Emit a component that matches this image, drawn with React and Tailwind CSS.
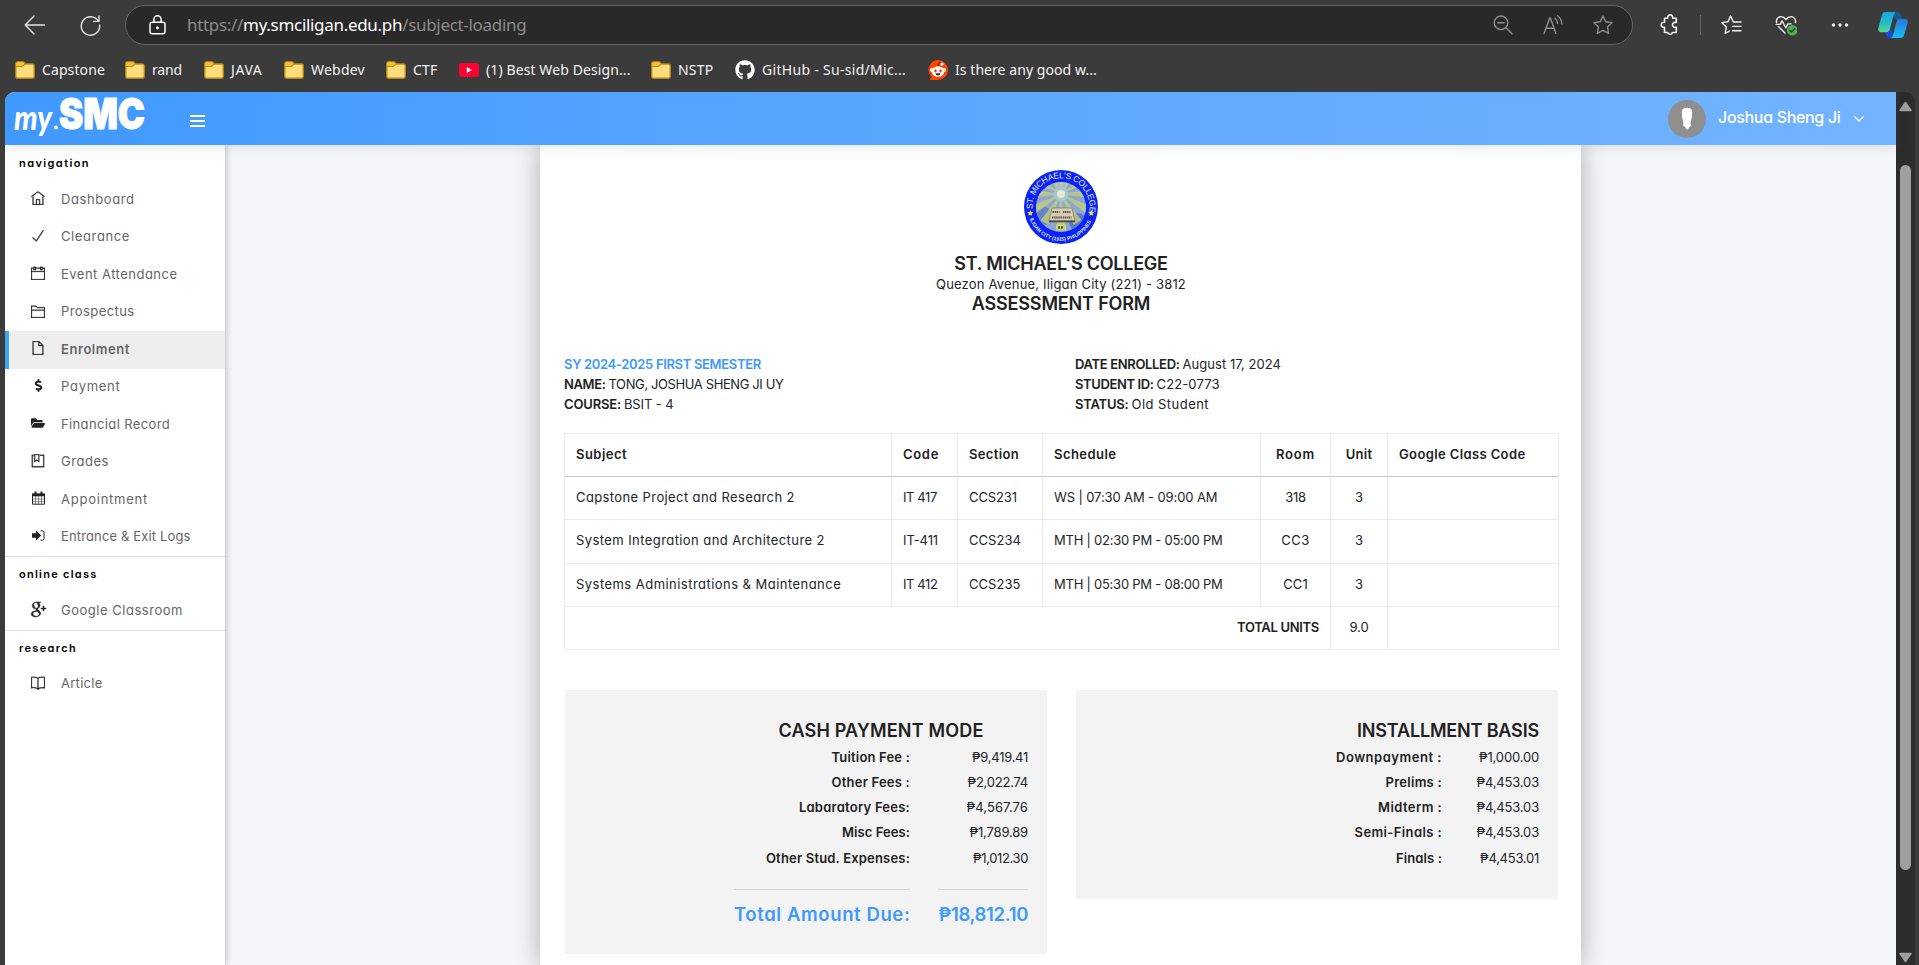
import React from "react";
import { TfiHome, TfiCheck, TfiCalendar, TfiFolder, TfiFile, TfiBookmarkAlt, TfiBook } from "react-icons/tfi";
import { FaDollarSign, FaFolderOpen, FaGithub } from "react-icons/fa";
import { TiSocialGooglePlus } from "react-icons/ti";

/* ---------- browser icons ---------- */

function Icon({ children, className = "", width = 1.4 }) {
  return (
    <svg viewBox="0 0 22 22" className={"size-[22px] shrink-0 " + className} fill="none" stroke="currentColor" strokeWidth={width} strokeLinecap="round" strokeLinejoin="round">
      {children}
    </svg>
  );
}

const BackIcon = () => (
  <Icon className="text-[#e4e4e4]"><path d="M20.5 11H1.5M10 2 1.2 11 10 20" /></Icon>
);

const RefreshIcon = () => (
  <Icon className="text-[#e4e4e4]"><path d="M19.3 7.2A9.2 9.2 0 1 0 20.6 11M20 2v5.4h-5.4" /></Icon>
);

const LockIcon = () => (
  <svg viewBox="0 0 17 20" className="h-5 w-[17px] shrink-0" fill="none" stroke="#fff" strokeWidth="1.5">
    <rect x="1" y="7.2" width="15" height="11.6" rx="2.2" />
    <path d="M4.9 7V4.3a3.6 3.6 0 0 1 7.2 0V7" />
    <circle cx="8.5" cy="13" r="1.4" fill="#fff" stroke="none" />
  </svg>
);

const ZoomOutIcon = () => (
  <Icon className="text-[#8f8f8f]"><circle cx="9" cy="8.8" r="6.8" /><path d="M5.8 8.8h6.4M14 13.8l6 6" /></Icon>
);

const ReadAloudIcon = () => (
  <Icon className="text-[#8f8f8f]"><path d="M2 19.5 7.7 4h.6L14 19.5M4 14.3h8M13 4.2c1.6 1.2 2.5 3 2.6 5.2M15.6 1.8c2.7 2 4.1 4.800 4.300 8.200" /></Icon>
);

const StarIcon = () => (
  <Icon className="text-[#8f8f8f]"><path d="m11 2 2.800 5.700 6.300.9-4.600 4.400 1.100 6.300L11 16.300l-5.600 3 1.100-6.300L1.900 8.600l6.300-.9z" /></Icon>
);

const PuzzleIcon = () => (
  <Icon className="text-[#f0f0f0]" width={1.6}>
    <path d="M5.500 4.200h3.200a2.600 2.600 0 1 1 5 0h3.600v4.200h-.8a2.500 2.500 0 1 0 0 4.900h.8v5.200h-3.800a2.500 2.500 0 0 1-4.800 0H5.500v-5.200a2.600 2.600 0 1 1 0-5z" />
  </Icon>
);

const FavoritesIcon = () => (
  <Icon className="text-[#f0f0f0]"><path d="M13.400 8 10.600 2 8 7.700l-6.300.9 4.600 4.500-1.100 6.400 4.200-2.500M13.400 8H21M12.500 12.400H21M12.500 16.800H21" /></Icon>
);

const HealthIcon = () => (
  <Icon className="text-[#f0f0f0]">
    <path d="M1.600 8.500C.9 5.500 3 2.600 6 2.600c2 0 3.600 1 5 2.900 1.400-1.900 3-2.900 5-2.900 3 0 5.100 2.900 4.400 5.900M3.400 12.500 10 19M1.200 10.400h3.900l2-3.600 3.600 7 2.300-3.900h3" />
    <circle cx="17.300" cy="16.300" r="5.300" fill="#4caf50" stroke="none" />
    <path d="m15 16.500 1.600 1.600 3-3.400" stroke="#22302a" />
  </Icon>
);

const MoreIcon = () => (
  <svg viewBox="0 0 18 22" className="h-[22px] w-[18px] shrink-0" fill="#f0f0f0">
    <circle cx="2.500" cy="11" r="1.700" /><circle cx="9" cy="11" r="1.700" /><circle cx="15.500" cy="11" r="1.700" />
  </svg>
);

const CopilotIcon = () => (
  <svg viewBox="0 0 30 28" className="h-7 w-[30px] shrink-0">
    <defs>
      <linearGradient id="copLeft" x1="0" y1="0" x2="0" y2="1">
        <stop offset="0" stopColor="#1aa6e8" /><stop offset=".6" stopColor="#22bfc4" /><stop offset="1" stopColor="#5fd893" />
      </linearGradient>
      <linearGradient id="copRight" x1="0" y1="0" x2="0" y2="1">
        <stop offset="0" stopColor="#2b74e0" /><stop offset="1" stopColor="#17c0f5" />
      </linearGradient>
    </defs>
    <path d="M14 1h5c2 0 3 1.200 3.600 3l1.300 5h-6z" fill="#0f5f8f" />
    <path d="M16 27h-4c-2.200 0-3.200-1.200-3.800-3l-1-3.500 6.500-1.500z" fill="#1c4be0" />
    <path d="M7.500 1H18c-1.300.6-2 2-2.600 4.300l-3.400 12.500c-.7 2.200-1.700 3.500-3.700 3.500H3.500C1 21.300-.3 19.500.5 16.500L3.800 4.500C4.500 2 5.500 1 7.500 1z" fill="url(#copLeft)" />
    <path d="M22.500 27H12.800c1.300-.6 2-2 2.600-4L18.300 11.300c.7-2.200 2-3.500 4-3.500h4.200c2.800 0 3.800 1.800 3.100 4.500L26.300 23.500C25.500 26 24.500 27 22.500 27z" fill="url(#copRight)" />
  </svg>
);

const FolderBookmark = () => (
  <svg viewBox="0 0 20 18" className="h-[18px] w-5 shrink-0">
    <path d="M.8 2.500C.8 1.500 1.500.8 2.500.8h5.300c.8 0 1.200.4 1.700 1.100l.8 1.100h7.200c1 0 1.700.7 1.700 1.700v10.800c0 1-.7 1.700-1.700 1.700h-15c-1 0-1.700-.7-1.700-1.700z" fill="#ffdc7c" stroke="#bd8b12" strokeWidth="1.300" />
    <path d="M1.500 2.500c0-.7.400-1 1-1h5.300L9.400 3.300 7.500 5.200h-6z" fill="#f8c42c" />
    <path d="M1 5.500h6.400l2.600-2.300" fill="none" stroke="#bd8b12" strokeWidth="1.100" />
  </svg>
);

const YoutubeBookmark = () => (
  <svg viewBox="0 0 20 14" className="h-3.5 w-5 shrink-0">
    <rect width="20" height="14" rx="3" fill="#ff0033" />
    <path d="M7.800 4v6l5-3z" fill="#fff" />
  </svg>
);

const RedditBookmark = () => (
  <svg viewBox="0 0 20 20" className="size-5 shrink-0">
    <path d="M10 0a10 10 0 1 1 0 20H1.500l2-3A10 10 0 0 1 10 0z" fill="#ff4500" />
    <circle cx="4" cy="10" r="2" fill="#fff" /><circle cx="16" cy="10" r="2" fill="#fff" />
    <path d="m10 6 1-3.300 2.500.6" fill="none" stroke="#3b1a10" strokeWidth=".9" />
    <circle cx="14" cy="4" r="1.600" fill="#fff" />
    <ellipse cx="10" cy="11.500" rx="6.300" ry="5.300" fill="#fff" />
    <ellipse cx="7.500" cy="10.800" rx="1.300" ry="1.600" fill="#ff4500" /><ellipse cx="12.500" cy="10.800" rx="1.300" ry="1.600" fill="#ff4500" />
    <path d="M7.500 13.300h5c-.3 1.500-1.200 2.200-2.500 2.200s-2.200-.7-2.500-2.200z" fill="#26323a" />
  </svg>
);

/* ---------- sidebar icons that the icon packs lack ---------- */

const CalendarGridIcon = () => (
  <svg viewBox="0 0 13 14" className="h-3.5 w-[13px]">
    <path d="M.5 3.200h12v10H.5z" fill="none" stroke="currentColor" strokeWidth="1" />
    <path d="M0 2.500h13v2.800H0z" fill="currentColor" />
    <path d="M3.500.5v3M9.500.5v3" stroke="currentColor" strokeWidth="2" />
    <path d="M3.500 5v8M6.500 5v8M9.500 5v8M.5 8h12M.5 10.600h12" stroke="currentColor" strokeWidth=".5" />
  </svg>
);

const SignInIcon = () => (
  <svg viewBox="0 0 13 11" className="h-[11px] w-[13px]">
    <path d="M0 3.300h4V.6l5.200 4.900L4 10.400V7.700H0z" fill="currentColor" />
    <path d="M8.500.9h2.300c.8 0 1.200.5 1.200 1.400v6.400c0 .9-.4 1.400-1.200 1.400H8.500" fill="none" stroke="currentColor" strokeWidth="1" />
  </svg>
);

/* ---------- data ---------- */

const bookmarks = [
  { icon: "folder", label: "Capstone", text: "tracking-[0.1px]", box: "w-[90px]" },
  { icon: "folder", label: "rand", text: "tracking-[-0.16px]", box: "w-[59px]" },
  { icon: "folder", label: "JAVA", text: "tracking-[0.6px]", box: "w-[60px]" },
  { icon: "folder", label: "Webdev", text: "tracking-[0.23px]", box: "w-[82px]" },
  { icon: "folder", label: "CTF", text: "tracking-[0.2px]", box: "w-[53px]" },
  { icon: "youtube", label: "(1) Best Web Design...", text: "tracking-[0.1px]", box: "w-[172px]" },
  { icon: "folder", label: "NSTP", text: "tracking-[0.2px]", box: "w-16" },
  { icon: "github", label: "GitHub - Su-sid/Mic...", text: "tracking-[0.3px]", box: "w-[173px]" },
  { icon: "reddit", label: "Is there any good w...", text: "tracking-[0.06px]", box: "w-[172px]" },
];

const thin = "[stroke-width:0.4]";

const sections = [
  {
    title: "navigation",
    spacing: "tracking-[1.41px]",
    items: [
      { label: "Dashboard", spacing: "tracking-[0.58px]", icon: <TfiHome className={thin} /> },
      { label: "Clearance", spacing: "tracking-[0.61px]", icon: <TfiCheck className={thin} /> },
      { label: "Event Attendance", spacing: "tracking-[0.49px]", icon: <TfiCalendar className={thin} /> },
      { label: "Prospectus", spacing: "tracking-[0.41px]", icon: <TfiFolder className={thin} /> },
      { label: "Enrolment", spacing: "tracking-[0.56px]", icon: <TfiFile className={thin} />, active: true },
      { label: "Payment", spacing: "tracking-[0.73px]", icon: <FaDollarSign className="size-[13px]" /> },
      { label: "Financial Record", spacing: "tracking-[0.37px]", icon: <FaFolderOpen /> },
      { label: "Grades", spacing: "tracking-[0.54px]", icon: <TfiBookmarkAlt className={thin} /> },
      { label: "Appointment", spacing: "tracking-[0.76px]", icon: <CalendarGridIcon /> },
      { label: "Entrance & Exit Logs", spacing: "tracking-[0.14px]", icon: <SignInIcon /> },
    ],
  },
  {
    title: "online class",
    spacing: "tracking-[1.26px]",
    items: [{ label: "Google Classroom", spacing: "tracking-[0.52px]", icon: <TiSocialGooglePlus className="size-6 [stroke-width:0.5]" /> }],
  },
  {
    title: "research",
    spacing: "tracking-[1.34px]",
    items: [{ label: "Article", spacing: "tracking-[0.27px]", icon: <TfiBook className={thin} /> }],
  },
];

const details = [
  [
    { label: "NAME:", labelSpacing: "tracking-[-0.37px]", value: "TONG, JOSHUA SHENG JI UY", spacing: "tracking-[-0.39px]" },
    { label: "COURSE:", labelSpacing: "tracking-[-0.16px]", value: "BSIT - 4", spacing: "tracking-[-0.12px]" },
  ],
  [
    { label: "DATE ENROLLED:", labelSpacing: "tracking-[-0.34px]", value: "August 17, 2024", spacing: "tracking-[0.05px]" },
    { label: "STUDENT ID:", labelSpacing: "tracking-[-0.38px]", value: "C22-0773", spacing: "tracking-[0.12px]" },
    { label: "STATUS:", labelSpacing: "tracking-[-0.21px]", value: "Old Student", spacing: "tracking-[0.46px]" },
  ],
];

const columns = [
  { name: "Subject", cell: "w-[327px] text-left tracking-[0.46px]" },
  { name: "Code", cell: "w-[66px] text-left tracking-[0.68px]" },
  { name: "Section", cell: "w-[85px] text-left tracking-[0.35px]" },
  { name: "Schedule", cell: "w-[218px] text-left tracking-[0.46px]" },
  { name: "Room", cell: "w-[70px] text-center tracking-[0.79px]" },
  { name: "Unit", cell: "w-[57px] text-center tracking-[0.25px]" },
  { name: "Google Class Code", cell: "w-[171px] text-left tracking-[0.38px]" },
];

const subjects = [
  [["Capstone Project and Research 2", "tracking-[0.39px]"], ["IT 417", "tracking-[-0.39px]"], ["CCS231", "tracking-[-0.1px]"], ["WS | 07:30 AM - 09:00 AM", "tracking-[-0.11px]"], ["318", "text-center tracking-[-0.29px]"]],
  [["System Integration and Architecture 2", "tracking-[0.42px]"], ["IT-411", "tracking-[-0.1px]"], ["CCS234", "tracking-[0.05px]"], ["MTH | 02:30 PM - 05:00 PM", "tracking-[-0.24px]"], ["CC3", "text-center tracking-[0.49px]"]],
  [["Systems Administrations & Maintenance", "tracking-[0.46px]"], ["IT 412", "tracking-[-0.4px]"], ["CCS235", "tracking-[0.05px]"], ["MTH | 05:30 PM - 08:00 PM", "tracking-[-0.24px]"], ["CC1", "text-center tracking-[0.07px]"]],
];

const cashFees = [
  ["Tuition Fee :", "tracking-[0.18px]", "₱9,419.41", "tracking-[-0.27px]"],
  ["Other Fees :", "tracking-[0.22px]", "₱2,022.74", "tracking-[-0.23px]"],
  ["Labaratory Fees:", "tracking-[0.24px]", "₱4,567.76", "tracking-[0.1px]"],
  ["Misc Fees:", "tracking-[0.07px]", "₱1,789.89", "tracking-[-0.17px]"],
  ["Other Stud. Expenses:", "tracking-[0.19px]", "₱1,012.30", "tracking-[-0.38px]"],
];

const installments = [
  ["Downpayment :", "tracking-[0.52px]", "₱1,000.00", "tracking-[-0.16px]"],
  ["Prelims :", "tracking-[0.27px]", "₱4,453.03", "tracking-[-0.17px]"],
  ["Midterm :", "tracking-[0.41px]", "₱4,453.03", "tracking-[-0.17px]"],
  ["Semi-Finals :", "tracking-[0.39px]", "₱4,453.03", "tracking-[-0.17px]"],
  ["Finals :", "tracking-[0.12px]", "₱4,453.01", "tracking-[-0.26px]"],
];

/* ---------- browser chrome ---------- */

function Toolbar() {
  return (
    <div className="flex h-[49px] shrink-0 items-center pl-6">
      <BackIcon />
      <div className="ml-[33px] flex"><RefreshIcon /></div>
      <div className="ml-[24px] flex h-10 w-[1508px] items-center rounded-full border border-[#666] bg-[#292929] pr-[18px] pl-[23px]">
        <LockIcon />
        <div className="ml-[21px] text-[17px] font-normal tracking-[-0.31px] whitespace-nowrap text-[#8c8c8c] font-['Noto_Sans',sans-serif]">
          https://<span className="text-white">my.smciligan.edu.ph</span>/subject-loading
        </div>
        <div className="ml-auto flex gap-[28px]">
          <ZoomOutIcon />
          <ReadAloudIcon />
          <StarIcon />
        </div>
      </div>
      <div className="ml-[26px] flex"><PuzzleIcon /></div>
      <div className="ml-[19px] h-5 w-px bg-[#666]" />
      <div className="ml-[19px] flex items-center gap-[33px]">
        <FavoritesIcon />
        <HealthIcon />
      </div>
      <div className="ml-[34px] flex"><MoreIcon /></div>
      <div className="ml-[29px] flex"><CopilotIcon /></div>
    </div>
  );
}

function BookmarkIcon({ kind }) {
  if (kind === "youtube") return <YoutubeBookmark />;
  if (kind === "github") return <FaGithub className="size-5 shrink-0 text-white" />;
  if (kind === "reddit") return <RedditBookmark />;
  return <FolderBookmark />;
}

function Bookmarks() {
  return (
    <div className="flex h-[43px] shrink-0 items-center gap-5 pb-[2px] pl-[15px]">
      {bookmarks.map((b) => (
        <div key={b.label} className={"flex items-center gap-[7px] " + b.box}>
          <BookmarkIcon kind={b.icon} />
          <span className={"text-[14px] leading-5 whitespace-nowrap text-[#f4f4f4] font-['Noto_Sans',sans-serif] " + b.text}>{b.label}</span>
        </div>
      ))}
    </div>
  );
}

function Scrollbar() {
  return (
    <div className="flex w-[19px] shrink-0 flex-col items-center rounded-tr-[10px] bg-[#2c2c2c] pt-[9px]">
      <svg viewBox="0 0 13 11" className="h-[11px] w-[13px] shrink-0"><path d="M6.500 1.500 12 9.500H1z" fill="#9f9f9f" stroke="#9f9f9f" strokeWidth="1.500" strokeLinejoin="round" /></svg>
      <div className="mt-[53px] h-[705px] w-[11px] shrink-0 rounded-full bg-[#9f9f9f]" />
      <svg viewBox="0 0 13 11" className="mt-[82px] h-[11px] w-[13px] shrink-0"><path d="M6.500 9.500 12 1.500H1z" fill="#9f9f9f" stroke="#9f9f9f" strokeWidth="1.500" strokeLinejoin="round" /></svg>
    </div>
  );
}

/* ---------- page ---------- */

function Header() {
  return (
    <header className="relative z-10 flex h-[53px] shrink-0 items-center rounded-tl-[10px] bg-linear-to-r from-[#4099ff] to-[#73b4ff] shadow-[0_2px_12px_rgba(69,90,100,0.16)]">
      <svg viewBox="0 0 160 53" className="h-[53px] w-[160px] overflow-visible" fill="#fff">
        <text x="9" y="37.500" fontFamily="Lato, sans-serif" fontStyle="italic" fontWeight="900" fontSize="34" textLength="38" lengthAdjust="spacingAndGlyphs">my</text>
        <circle cx="51" cy="35.500" r="2" />
        <text x="54" y="36.500" fontFamily="Inter, sans-serif" fontWeight="900" fontSize="42" stroke="#fff" strokeWidth="1" textLength="86" lengthAdjust="spacingAndGlyphs">SMC</text>
      </svg>
      <div className="ml-[25px] flex w-[15px] flex-col gap-[3px] pt-[5px]">
        <div className="h-[2px] bg-white" />
        <div className="h-[2px] bg-white" />
        <div className="h-[2px] bg-white" />
      </div>
      <div className="mr-[31px] ml-auto flex items-center">
        <svg viewBox="0 0 38 38" className="size-[38px]">
          <circle cx="19" cy="19" r="19" fill="#8f8f8f" />
          <path d="M13.800 11.500C13.800 8.800 15.800 7.700 19 7.700s5.200 1.100 5.200 3.800c0 2.800-.2 6-1.200 9.500-.4 1.500-.8 3 .4 4.200-1.200.8-2.200 2-4.100 4.800-1.500-2.300-2.500-3.800-4.600-4.800 1.200-1.300.7-2.900.2-4.300-1-3.300-1.100-6.800-1.100-9.400z" fill="#fff" />
        </svg>
        <span className="ml-3 w-[124px] pb-[3px] text-base leading-5 font-medium tracking-[-0.32px] whitespace-nowrap text-white">Joshua Sheng Ji</span>
        <svg viewBox="0 0 12 8" className="ml-[11px] h-2 w-3" fill="none" stroke="#fff" strokeWidth="1.400"><path d="m1.500 1.500 4.500 4.500 4.500-4.500" /></svg>
      </div>
    </header>
  );
}

function Sidebar() {
  return (
    <nav className="relative w-[220px] shrink-0 bg-white shadow-[1px_0_6px_rgba(43,43,43,0.3)]">
      {sections.map((s, i) => (
        <div key={s.title} className={i ? "border-t border-[#e2e2e2]" : ""}>
          <div className={"pl-[14px] text-[11px] font-semibold text-black " + (i ? "h-[35px] leading-[35px] " : "h-[36px] leading-[36px] ") + s.spacing}>{s.title}</div>
          {s.items.map((it) => (
            <div key={it.label} className={"flex h-[37.5px] items-center border-l-4 " + (it.active ? "border-[#3aa8f7] bg-[#eee]" : "border-transparent")}>
              <span className="ml-[17px] flex w-6 justify-center pb-[3px] text-[14px] text-[#222]">{it.icon}</span>
              <span className={"ml-[11px] pb-[2px] text-[13px] leading-5 whitespace-nowrap text-[#666] " + (it.active ? "font-semibold " : "") + it.spacing}>{it.label}</span>
            </div>
          ))}
        </div>
      ))}
    </nav>
  );
}

function Seal() {
  const rays = [-150, -120, -60, -30, 0, 30, 60, 120, 150, 180, -90, 90];
  return (
    <svg viewBox="0 0 74 74" className="size-[74px]">
      <defs>
        <path id="sealTop" d="M9 42 A28.500 28.500 0 1 1 65 42" />
        <path id="sealBottom" d="M4.800 45 A33 33 0 0 0 69.200 45" />
        <clipPath id="sealInner"><circle cx="37" cy="37" r="25" /></clipPath>
      </defs>
      <circle cx="37" cy="37" r="37" fill="#0b24f5" />
      <g clipPath="url(#sealInner)">
        <rect width="74" height="74" fill="#8ea6d0" />
        <circle cx="20" cy="46" r="9" fill="#6683c8" /><circle cx="54" cy="52" r="9" fill="#5c7bc6" /><circle cx="37" cy="16" r="6" fill="#a9b9d6" />
        {rays.map((a) => (
          <path key={a} d="M37 24 70 19.500v9z" fill="#c3cf7a" opacity=".8" transform={`rotate(${a} 37 24)`} />
        ))}
        <circle cx="37" cy="24" r="7.500" fill="#a9c8c0" stroke="#7fc7ee" strokeWidth="1.300" strokeDasharray="1.500 1.500" />
        <circle cx="37" cy="24" r="4" fill="#e6e8d8" />
        <path d="M28 38h20l3 13H25z" fill="#d6cdb4" stroke="#6a6250" strokeWidth=".6" />
        <path d="M25 50.500h26v1.700H25z" fill="#4c493f" />
        <path d="M28.500 42h7M39 42h7.500M28 47.500h19.500" stroke="#5b5648" strokeWidth="1.800" strokeDasharray="1.500 .6" />
        <rect x="32" y="54.500" width="10" height="6" fill="#c8d67c" />
        <path d="M34 57.500h6" stroke="#4a5c3a" strokeWidth="2.500" strokeDasharray="2 1" />
      </g>
      <g fill="#ffe81a">
        <path d="m6.300 40 .9 1.900 2.100.3-1.500 1.500.3 2.100-1.800-1-1.900 1 .4-2.100-1.600-1.500 2.200-.3z" />
        <path d="m67.200 40 .9 1.900 2.100.3-1.500 1.500.3 2.100-1.800-1-1.900 1 .4-2.100-1.600-1.500 2.200-.3z" />
      </g>
      <g fill="#dfe6ff" fontFamily="Liberation Sans, sans-serif">
        <text fontSize="8.500"><textPath href="#sealTop" startOffset="3" textLength="97">ST. MICHAEL'S COLLEGE</textPath></text>
        <text fontSize="5" fontWeight="700"><textPath href="#sealBottom" startOffset="4" textLength="78">ILIGAN CITY (1915) PHILIPPINES</textPath></text>
      </g>
    </svg>
  );
}

function SubjectTable() {
  return (
    <table className="mt-[19.5px] w-[994px] table-fixed border-collapse text-[13px] leading-5 text-[#212529]">
      <thead>
        <tr className="h-[43px] border-b border-[#c5c7ca]">
          {columns.map((c) => (
            <th key={c.name} className={"border-x border-t border-[#e9ecef] border-b-[#c5c7ca] px-[11px] pb-0.5 font-semibold text-[#212121] whitespace-nowrap " + c.cell}>{c.name}</th>
          ))}
        </tr>
      </thead>
      <tbody>
        {subjects.map((row) => (
          <tr key={row[0][0]} className="h-[43.3px]">
            {row.map(([text, cell]) => (
              <td key={text} className={"border-x border-b border-[#e9ecef] px-[11px] pb-0.5 whitespace-nowrap " + cell}>{text}</td>
            ))}
            <td className="border-x border-b border-[#e9ecef] pb-0.5 text-center">3</td>
            <td className="border-x border-b border-[#e9ecef]" />
          </tr>
        ))}
        <tr className="h-[43.3px]">
          <td colSpan={5} className="border-x border-b border-[#e9ecef] pr-[11px] pb-0.5 text-right font-semibold tracking-[-0.31px] text-[#212121]">TOTAL UNITS</td>
          <td className="border-x border-b border-[#e9ecef] pb-0.5 text-center tracking-[-0.12px]">9.0</td>
          <td className="border-x border-b border-[#e9ecef]" />
        </tr>
      </tbody>
    </table>
  );
}

function FeeRows({ rows, valueWidth }) {
  return rows.map(([label, ls, value, vs]) => (
    <div key={label} className="flex h-[25.200px] items-center justify-end pb-0.5 text-[13px] leading-5 whitespace-nowrap">
      <span className={"font-semibold text-[#212121] " + ls}>{label}</span>
      <span className={"text-right text-[#212529] " + valueWidth + " " + vs}>{value}</span>
    </div>
  ));
}

function Payments() {
  return (
    <div className="mt-10 ml-px grid grid-cols-[482px_482px] items-start gap-[29px]">
      <section className="h-[264px] bg-[#f3f3f3] pt-[28px] pr-[19px]">
        <div className="ml-auto w-[294px]">
          <h2 className="h-[27px] text-center text-[18px] leading-[26px] font-semibold tracking-[0.17px] whitespace-nowrap text-[#212121]">CASH PAYMENT MODE</h2>
          <FeeRows rows={cashFees} valueWidth="w-[118px]" />
          <div className="mt-[18px] flex gap-[28px]">
            <div className="h-px w-[176px] bg-[#d8d8d8]" />
            <div className="h-px w-[90px] bg-[#d8d8d8]" />
          </div>
          <div className="mt-[11px] flex justify-between text-[18.5px] leading-[26px] font-semibold whitespace-nowrap text-[#4099ff]">
            <span className="tracking-[0.6px]">Total Amount Due:</span>
            <span className="tracking-[-0.35px]">₱18,812.10</span>
          </div>
        </div>
      </section>
      <section className="h-[209px] bg-[#f3f3f3] pt-[28px] pr-[19px]">
        <h2 className="h-[27px] text-right text-[18px] leading-[26px] font-semibold tracking-[-0.17px] whitespace-nowrap text-[#212121]">INSTALLMENT BASIS</h2>
        <FeeRows rows={installments} valueWidth="w-[97px]" />
      </section>
    </div>
  );
}

function AssessmentForm() {
  return (
    <main className="ml-[315px] w-[1041px] shrink-0 bg-white px-6 pt-[25px] shadow-[0_0_25px_rgba(0,0,0,0.3)]">
      <div className="flex flex-col items-center pl-px whitespace-nowrap">
        <Seal />
        <h1 className="mt-[9.500px] text-[18px] leading-5 font-semibold tracking-[-0.24px] text-[#212121]">ST. MICHAEL'S COLLEGE</h1>
        <p className="text-[13px] leading-5 tracking-[0.19px] text-[#212529]">Quezon Avenue, Iligan City (221) - 3812</p>
        <h2 className="text-[18px] leading-5 font-semibold tracking-[-0.17px] text-[#212121]">ASSESSMENT FORM</h2>
      </div>
      <div className="mt-[40px] grid grid-cols-[511px_1fr] text-[13px] leading-5 whitespace-nowrap text-[#212529]">
        {details.map((group, i) => (
          <div key={i}>
            {i === 0 && <div className="font-semibold tracking-[-0.33px] text-[#4099ff]">SY 2024-2025 FIRST SEMESTER</div>}
            {group.map((d) => (
              <div key={d.label}>
                <strong className={"mr-[3px] font-semibold text-[#212121] " + d.labelSpacing}>{d.label}</strong>
                <span className={d.spacing}>{d.value}</span>
              </div>
            ))}
          </div>
        ))}
      </div>
      <SubjectTable />
      <Payments />
    </main>
  );
}

export default function App() {
  return (
    <div className="flex h-[965px] w-full flex-col overflow-hidden bg-[#3b3b3b] font-['Inter',sans-serif] [font-feature-settings:'cv11']">
      <Toolbar />
      <Bookmarks />
      <div className="flex min-h-0 flex-1 pr-[4px] pl-[5px]">
        <div className="flex min-w-0 flex-1 flex-col rounded-tl-[10px] bg-[#f5f6fa]">
          <Header />
          <div className="flex min-h-0 flex-1 overflow-hidden">
            <Sidebar />
            <AssessmentForm />
          </div>
        </div>
        <Scrollbar />
      </div>
    </div>
  );
}
